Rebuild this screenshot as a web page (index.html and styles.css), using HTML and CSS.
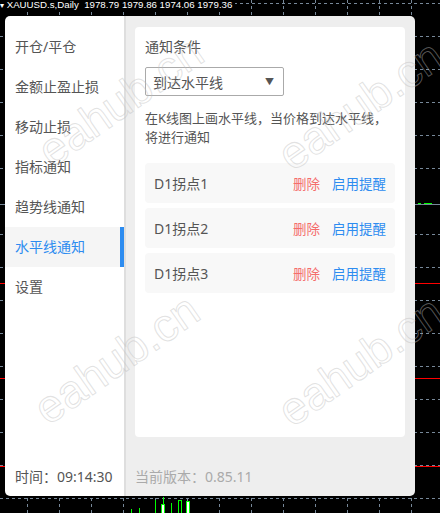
FILE: index.html
```html
<!DOCTYPE html>
<html lang="zh-CN">
<head>
  <meta charset="UTF-8">
  <meta name="viewport" content="width=device-width, initial-scale=1.0">
  <title>水平线通知</title>
  <link rel="stylesheet" href="styles.css">
</head>
<body>
  <!-- chart behind the panel -->
  <svg class="chart" width="440" height="513" viewBox="0 0 440 513">
    <g class="grid">
      <line x1="0" y1="3.5" x2="440" y2="3.5"/>
      <line x1="0" y1="36.5" x2="440" y2="36.5"/>
      <line x1="0" y1="69.5" x2="440" y2="69.5"/>
      <line x1="0" y1="102.5" x2="440" y2="102.5"/>
      <line x1="0" y1="135.5" x2="440" y2="135.5"/>
      <line x1="0" y1="168.5" x2="440" y2="168.5"/>
      <line x1="0" y1="234.5" x2="440" y2="234.5"/>
      <line x1="0" y1="267.5" x2="440" y2="267.5"/>
      <line x1="0" y1="300.5" x2="440" y2="300.5"/>
      <line x1="0" y1="333.5" x2="440" y2="333.5"/>
      <line x1="0" y1="366.5" x2="440" y2="366.5"/>
      <line x1="0" y1="399.5" x2="440" y2="399.5"/>
      <line x1="0" y1="432.5" x2="440" y2="432.5"/>
      <line x1="0" y1="465.5" x2="440" y2="465.5"/>
      <line x1="0" y1="498.5" x2="440" y2="498.5"/>
      <line x1="27.5" y1="0" x2="27.5" y2="513"/>
      <line x1="59.5" y1="0" x2="59.5" y2="513"/>
      <line x1="91.5" y1="0" x2="91.5" y2="513"/>
      <line x1="123.5" y1="0" x2="123.5" y2="513"/>
      <line x1="155.5" y1="0" x2="155.5" y2="513"/>
      <line x1="187.5" y1="0" x2="187.5" y2="513"/>
      <line x1="219.5" y1="0" x2="219.5" y2="513"/>
      <line x1="251.5" y1="0" x2="251.5" y2="513"/>
      <line x1="283.5" y1="0" x2="283.5" y2="513"/>
      <line x1="315.5" y1="0" x2="315.5" y2="513"/>
      <line x1="347.5" y1="0" x2="347.5" y2="513"/>
      <line x1="379.5" y1="0" x2="379.5" y2="513"/>
      <line x1="411.5" y1="0" x2="411.5" y2="513"/>
    </g>
    <line class="price-line" x1="0" y1="204.5" x2="440" y2="204.5"/>
    <line class="level" x1="0" y1="283.5" x2="440" y2="283.5"/>
    <line class="level" x1="0" y1="378.5" x2="440" y2="378.5"/>
    <line class="level" x1="0" y1="466.5" x2="440" y2="466.5"/>
    <g class="candles">
      <line x1="131.5" y1="509" x2="131.5" y2="513"/>
      <line x1="139.5" y1="508" x2="139.5" y2="513"/>
      <line x1="155.5" y1="500" x2="155.5" y2="513"/>
      <line x1="163.5" y1="497" x2="163.5" y2="513"/>
      <line x1="171.5" y1="503" x2="171.5" y2="513"/>
      <rect x="178.5" y="500.5" width="3" height="13"/>
      <rect class="up" x="186.5" y="501.5" width="3" height="12"/>
      <rect class="up" x="161.5" y="504.5" width="3" height="9"/>
      <line x1="418" y1="203.5" x2="421" y2="203.5"/>
      <line x1="424" y1="203.5" x2="432" y2="203.5"/>
    </g>
  </svg>
  <div class="chart-title"><span class="tri">▾</span> XAUUSD.s,Daily&nbsp; 1978.79 1979.86 1974.06 1979.36</div>

  <div class="panel">
    <aside class="sidebar">
      <ul class="menu">
        <li class="menu-item">开仓/平仓</li>
        <li class="menu-item">金额止盈止损</li>
        <li class="menu-item">移动止损</li>
        <li class="menu-item">指标通知</li>
        <li class="menu-item">趋势线通知</li>
        <li class="menu-item active">水平线通知</li>
        <li class="menu-item">设置</li>
      </ul>
      <div class="clock">时间：09:14:30</div>
    </aside>

    <main class="content">
      <div class="card">
        <div class="card-title">通知条件</div>
        <div class="select">
          <span>到达水平线</span>
          <span class="caret">▼</span>
        </div>
        <p class="hint">在K线图上画水平线，当价格到达水平线，<br>将进行通知</p>
        <div class="line-list">
          <div class="line-row">
            <span class="line-name">D1拐点1</span>
            <span class="actions"><a href="#" class="del">删除</a><a href="#" class="enable">启用提醒</a></span>
          </div>
          <div class="line-row">
            <span class="line-name">D1拐点2</span>
            <span class="actions"><a href="#" class="del">删除</a><a href="#" class="enable">启用提醒</a></span>
          </div>
          <div class="line-row">
            <span class="line-name">D1拐点3</span>
            <span class="actions"><a href="#" class="del">删除</a><a href="#" class="enable">启用提醒</a></span>
          </div>
        </div>
      </div>
      <div class="version">当前版本：0.85.11</div>
    </main>
  </div>

  <!-- watermarks -->
  <div class="wm wm-1">eahub.cn</div>
  <div class="wm wm-2">eahub.cn</div>
  <div class="wm wm-3">eahub.cn</div>
  <div class="wm wm-4">eahub.cn</div>
</body>
</html>
```

FILE: styles.css
```css
* {
  margin: 0;
  padding: 0;
  box-sizing: border-box;
}

body {
  width: 440px;
  height: 513px;
  background: #000;
  position: relative;
  overflow: hidden;
  font-family: "Noto Sans", "Noto Sans CJK SC", sans-serif;
  color: #555;
}

.chart {
  position: absolute;
  left: 0;
  top: 0;
  display: block;
}

.grid line {
  stroke: #778899;
  stroke-width: 1;
  stroke-dasharray: 3 3;
}

.price-line {
  stroke: #778899;
  stroke-width: 1;
}

.level {
  stroke: #ff0000;
  stroke-width: 1;
}

.candles line {
  stroke: #00ff00;
  stroke-width: 1;
}

.candles rect {
  fill: none;
  stroke: #00ff00;
  stroke-width: 1;
}

.candles rect.up {
  fill: #fff;
}

.chart-title {
  position: absolute;
  left: 0;
  top: 0;
  height: 9px;
  padding-right: 3px;
  background: #000;
  color: #fff;
  font-family: "Liberation Sans", sans-serif;
  font-size: 9.7px;
  line-height: 9px;
  white-space: pre;
}

.chart-title .tri {
  font-size: 8px;
}

.panel {
  position: absolute;
  left: 5px;
  top: 16px;
  width: 410px;
  height: 480px;
  border-radius: 5px;
  overflow: hidden;
  display: flex;
}

.sidebar {
  width: 121px;
  background: #fff;
  border-right: 2px solid #dedede;
  display: flex;
  flex-direction: column;
  justify-content: space-between;
  padding: 11px 0 9px;
}

.menu {
  list-style: none;
}

.menu-item {
  height: 40px;
  line-height: 40px;
  padding-left: 10px;
  font-size: 14px;
  color: #555;
}

.menu-item.active {
  background: #f5f5f5;
  color: #2d8cf0;
  border-right: 4px solid #2d8cf0;
}

.clock {
  padding-left: 10px;
  font-size: 14px;
  line-height: 20px;
  color: #555;
}

.content {
  flex: 1;
  background: #eee;
  padding: 11px 10px 9px 9px;
  display: flex;
  flex-direction: column;
  justify-content: space-between;
}

.card {
  height: 410px;
  background: #fff;
  border-radius: 4px;
  padding: 10px;
}

.card-title {
  font-size: 14px;
  line-height: 20px;
}

.select {
  margin-top: 10px;
  width: 139px;
  height: 29px;
  border: 1px solid #aaa;
  border-radius: 2px;
  padding: 0 9px 0 7px;
  display: flex;
  justify-content: space-between;
  align-items: center;
  font-size: 14px;
}

.caret {
  font-size: 9px;
  color: #555;
}

.hint {
  margin-top: 13px;
  font-size: 13px;
  line-height: 19px;
}

.line-list {
  margin-top: 16px;
  display: flex;
  flex-direction: column;
  gap: 5px;
}

.line-row {
  height: 40px;
  background: #f8f8f8;
  border-radius: 4px;
  padding: 0 9px;
  display: flex;
  justify-content: space-between;
  align-items: center;
  font-size: 14px;
}

.actions {
  display: flex;
  gap: 12px;
  font-size: 13.5px;
}

.actions a {
  text-decoration: none;
}

.del {
  color: #f56c6c;
}

.enable {
  color: #2d8cf0;
}

.version {
  font-size: 14px;
  line-height: 20px;
  color: #aaa;
}

.wm {
  position: absolute;
  font-family: "Liberation Sans", sans-serif;
  font-size: 46px;
  color: transparent;
  -webkit-text-stroke: 1px rgba(190, 190, 190, 0.45);
  transform: rotate(-35deg);
  transform-origin: left bottom;
  white-space: nowrap;
  pointer-events: none;
  line-height: 1;
}

.wm-1 { left: 56px; top: 128px; }
.wm-2 { left: 296px; top: 132px; }
.wm-3 { left: 52px; top: 386px; }
.wm-4 { left: 296px; top: 388px; }
```
